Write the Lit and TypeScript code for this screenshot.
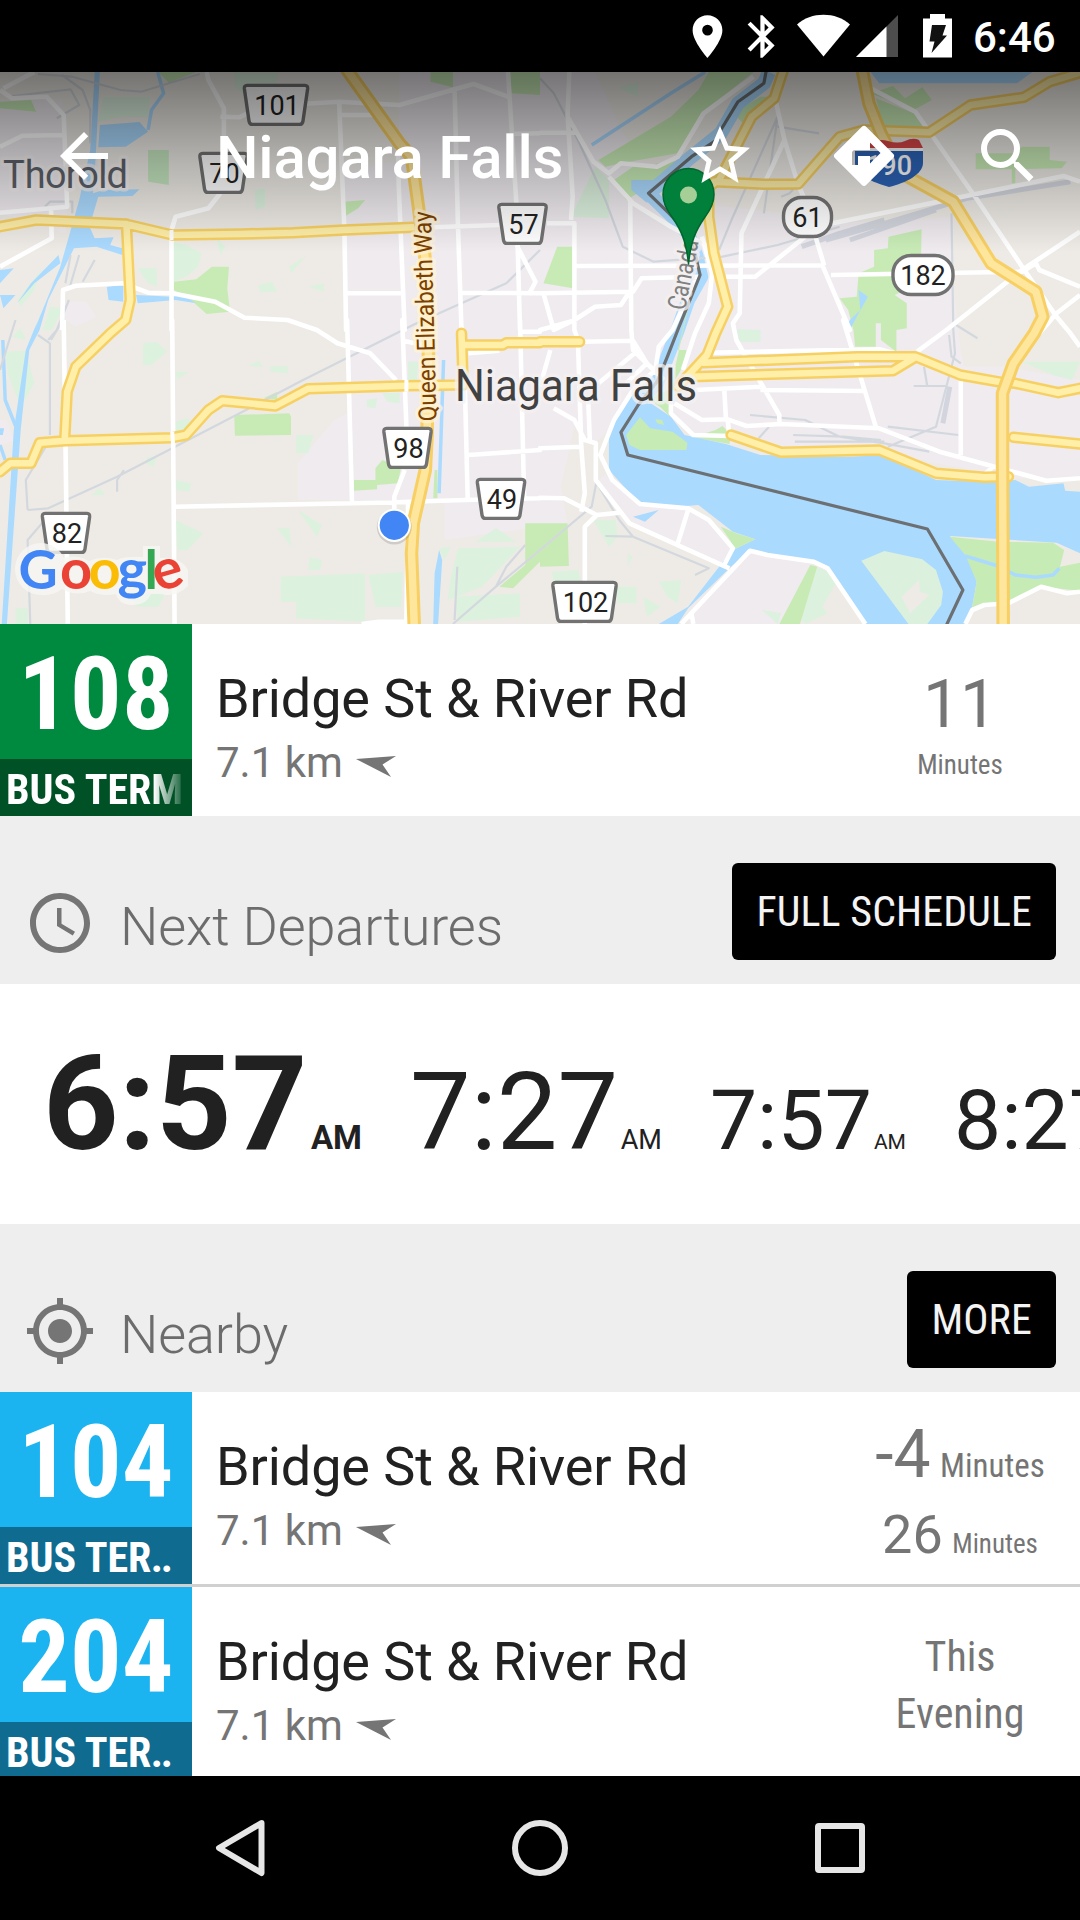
import { LitElement, html, svg, css, nothing, TemplateResult } from "lit";
import { customElement, property } from "lit/decorators.js";

/* Map geometry is kept per tile; a letter in a point list switches the tile. */
const TILES: Record<string, [number, number]> = { A: [0, 0], B: [540, 0], C: [0, 320], D: [540, 320] };
const SX = 540 / 1568;
const SY = 1 / 3;

function line(src: string, close = false): string {
  let [ox, oy] = TILES.A;
  const out: string[] = [];
  const t = src.trim().split(/\s+/);
  for (let i = 0; i < t.length; ) {
    if (TILES[t[i]]) {
      [ox, oy] = TILES[t[i]];
      i++;
      continue;
    }
    out.push(`${(ox + +t[i] * SX).toFixed(1)} ${(oy + +t[i + 1] * SY).toFixed(1)}`);
    i += 2;
  }
  return "M" + out.join("L") + (close ? "Z" : "");
}
const lines = (list: string[], close = false) => list.map((l) => line(l, close)).join("");

const URBAN = [
  "A 1000 520 1160 480 1160 216 1568 216 B 160 216 240 400 380 600 700 640 850 670 1200 650 1200 860 D 1220 80 1230 140 1350 140 1568 180 1568 480 1380 475 1000 400 500 370 380 300 200 330 160 370 100 320 60 500 80 610 0 620 C 1290 660 1290 540 865 540 865 430 970 300 1010 280",
  "A 0 300 180 300 195 620 190 700 0 640",
  "A 185 905 250 905 280 950 220 980 190 960",
  "D 430 870 610 690 790 725 780 740 700 912 430 912",
  "D 165 480 200 460 290 552 430 565 490 600 555 690 530 730 430 680 270 610",
  "C 0 380 40 360 20 300 0 300",
];
const GREEN = [
  "A 505 845 570 838 615 800 665 800 660 865 668 935 600 942 560 905 505 870",
  "A 1000 605 1060 600 1040 625 1000 650",
  "A 1480 216 1568 216 1568 285 1485 280",
  "A 1250 216 1315 216 1315 262 1250 245",
  "A 460 216 570 216 490 248",
  "A 0 305 90 300 105 335 0 325",
  "C 680 285 840 280 845 290 845 345 682 347",
  "C 1028 480 1090 480 1090 445 1110 420 1165 440 1155 490 1095 495 1095 508 1028 512",
  "C 765 235 805 215 805 240",
  "C 1525 610 1568 610 1568 725 1490 805 1450 800 1525 735",
  "C 1262 450 1270 450 1270 535 1258 535",
  "D 0 610 80 610 84 738 0 740",
  "D 785 735 805 740 755 912 695 912",
  "B 970 750 1010 745 1012 710 1108 688 1105 850 1030 885 1065 910 1065 990 D 1065 25 1035 30 1035 95 990 60 990 10 975 10 975 80 915 80 B 910 990 895 930 870 895 920 890 925 820 970 800",
  "B 490 216 620 216 470 340 400 460 235 490 190 500 170 480 380 350 460 270",
  "B 960 280 1025 258 1060 295 1110 262 1138 300 1085 330",
  "B 975 295 1085 340 1120 390 1000 390",
  "B 1265 460 1380 460 1400 440 1480 440 1480 480 1530 485 1515 505 1380 508 1380 550 1370 550 1370 508 1265 508",
  "B 560 340 640 290 660 290 620 350 600 380",
  "B 50 740 95 740 95 865 10 850",
  "B 215 540 270 500 420 480 350 540 250 600",
  "D 510 330 530 318 555 345 550 372 440 352",
];
const MINT = [
  "A 500 725 540 735 585 760 575 800 540 830 500 845",
  "A 400 805 455 805 455 860 430 850",
  "A 300 290 435 290 430 350 350 350 285 365",
  "A 740 570 770 565 770 620 742 630",
  "A 840 800 890 765 845 820",
  "A 750 855 790 845 805 875 755 875",
  "A 895 860 940 850 940 875",
  "A 630 715 655 740 640 765",
  "A 680 216 810 216 800 255 860 255 740 310 680 260",
  "A 50 900 120 810 100 870 60 920",
  "A 145 920 185 925 150 990 125 990",
  "B 160 500 200 540 200 655 90 650",
  "B 225 265 285 245 285 290",
  "C 415 70 455 65 485 95 440 135 415 135",
  "C 785 138 835 138 835 160 785 155",
  "C 720 138 750 122 765 140",
  "C 860 345 910 345 895 400 860 400",
  "C 510 600 590 640 545 690 515 690",
  "C 510 155 550 155 515 178",
  "C 510 305 545 295 560 320 510 345",
  "C 815 770 1060 760 1060 905 860 895 860 845 815 845",
  "C 1070 765 1170 755 1165 860 1090 860",
  "C 1275 685 1310 680 1290 720",
  "C 1330 685 1510 680 1400 800 1300 840 1310 770",
  "C 1320 830 1510 820 1510 890 1330 905",
  "C 1380 665 1440 625 1500 665",
  "C 510 480 555 490 550 515 512 510",
  "C 15 95 75 92 100 190 60 260 25 170",
  "C 370 820 480 820 460 860 400 860",
  "C 805 625 840 625 845 680",
  "C 865 570 935 615 920 650",
  "C 900 710 935 720 930 750 895 750",
  "C 430 410 455 410 445 440 420 430",
  "C 265 525 290 505 305 525",
  "C 45 865 80 865 80 912 45 912",
  "C 1065 240 1095 235 1090 265 1065 260",
  "C 1110 220 1160 218 1160 250 1125 245",
  "C 1185 125 1215 125 1210 180 1185 180",
  "C 35 50 60 25 75 60",
  "D 35 755 110 750 120 785 40 790",
  "D 155 600 220 600 225 650 200 680",
  "D 570 28 640 30 640 65 580 65",
  "D 220 800 280 800 280 850 225 850",
  "D 345 785 410 780 400 850 370 830",
  "D 300 830 350 860 310 890",
  "D 255 700 268 710 255 740",
  "D 790 735 870 770 820 860 835 880 770 912 760 900",
  "D 645 870 700 880 690 912",
  "D 1400 125 1568 125 1545 180 1490 165",
];
const WATER = [
  "A 275 216 290 216 278 470 270 580 300 570 405 568 385 588 285 590 260 680 275 715 330 712 320 735 355 745 355 765 280 740 215 745 140 900 115 990 C 85 90 60 330 20 912 5 912 40 330 75 90 110 0 A 100 990 175 800 230 600 262 450",
  "A 290 375 405 366 430 395 365 440 285 442",
  "A 310 860 358 855 358 905 315 900",
  "A 395 885 500 890 530 885 570 910 510 900 400 910",
  "A 0 810 40 805 0 850",
  "A 50 910 90 850 170 765 175 790 100 850",
  "A 0 885 45 885 10 925",
  "C 0 325 12 325 8 345 0 345",
  "C 1275 690 1284 720 1272 912 1258 912 1262 760",
  "B 265 540 330 540 360 570 310 608 265 570",
  "B 960 216 1430 216 1385 250 985 250",
  "B 925 870 952 890 920 950 900 990 D 905 25 895 10 B 900 960 930 930",
  "D 265 210 300 235 380 290 420 345 540 372 640 405 900 410 1000 405 1150 480 1300 485 1380 480 1420 500 1520 490 1525 512 1568 515 1568 700 1500 668 1190 648 1235 690 1268 785 1255 860 1235 912 945 912 835 745 790 725 610 690 550 745 430 865 400 912 345 912 430 860 520 740 560 690 625 658 560 635 460 555 400 560 290 552 200 450 200 330",
  "D 270 590 345 570 305 605",
];
const ISLE = [
  "D 250 345 290 292 320 325 385 335 428 368 425 390 290 390 260 375",
  "D 335 298 355 300 360 315 340 310",
  "D 310 235 375 210 378 290 350 262",
  "D 525 620 570 640 625 658 560 690 555 665",
  "D 1190 650 1330 665 1490 668 1522 690 1510 740 1568 728 1568 812 1455 800 1370 850 1255 862 1268 785 1235 705",
  "B 465 760 D 400 90 425 90 415 140 380 200",
];
const WHITE = [
  "A 600 216 605 240 650 325 650 470",
  "A 640 350 695 352 740 330",
  "A 640 580 605 625 510 650 498 690 498 990 C 500 0 507 912",
  "A 870 312 985 305 1160 315 1320 268 1375 252 1475 290",
  "A 985 345 1100 345",
  "A 1480 402 1568 400",
  "A 985 310 1000 690 1005 990 C 1008 0 1022 545",
  "A 1155 430 1158 560 1175 990 C 1168 0 1180 320",
  "A 1320 268 1330 680 1340 990 C 1350 200 1358 540",
  "A 1475 216 1500 620 1510 990 C 1510 0 1522 540",
  "A 1255 682 1450 675",
  "A 1000 880 1170 880",
  "A 1340 878 1568 880",
  "A 1500 735 1555 845 1535 885",
  "A 0 270 35 295 135 290 185 345 195 620 0 638",
  "A 0 440 65 407 185 405",
  "A 10 265 100 216",
  "A 148 625 150 715 0 800",
  "A 180 990 183 870 220 857 358 850 430 878 500 880 625 905 710 953 835 960 920 990 C 980 70 1075 100 1150 180",
  "C 185 0 190 350 197 912",
  "C 507 560 1100 548 1350 540 1568 535 D 0 533 70 535 165 585 230 578",
  "C 1175 450 1145 530 1145 580",
  "C 1185 545 1180 912",
  "C 1050 912 1100 905 1180 905",
  "C 1360 405 1568 390 D 0 385 120 380",
  "C 1360 100 1450 92",
  "C 1170 62 1230 75",
  "C 1510 35 1568 35 D 0 30 105 0",
  "B 85 216 80 345 95 590 90 660",
  "B 20 670 100 670 100 990 D 110 60 120 380 130 520 120 575",
  "B 80 350 155 485 200 520 235 490 340 500 400 470 475 340 620 230",
  "B 0 398 110 398",
  "B 200 530 270 610 380 680 490 740",
  "B 262 600 265 990 D 270 90 360 180",
  "B 100 798 820 796 900 990 D 880 0 975 320",
  "B 540 830 625 830 770 710",
  "B 800 710 825 796",
  "B 845 825 1400 815 1440 790 1450 810 1568 860",
  "B 960 265 1090 335 1270 600 1400 800 1500 950 1540 1000 D 1568 80",
  "B 1568 695 1400 810 1180 990 D 1095 95",
  "B 1568 885 1500 940 1450 1000",
  "B 850 670 1520 528 1568 545",
  "B 685 305 710 420 750 555 765 590",
  "B 710 420 585 700 580 940 560 970 D 570 60 695 285 695 305",
  "B 470 710 500 820 490 910 450 1000 D 415 150",
  "B 0 880 270 875 295 835 460 830",
  "B 10 880 40 990 100 960 160 920 235 915 260 875",
  "B 455 830 385 990 D 345 80 335 150 270 210 215 300 175 405 210 480 290 552 430 565 490 600 560 685 535 735",
  "D 490 98 985 88 1030 100",
  "D 30 90 0 200",
  "D 140 240 145 365",
  "D 125 65 270 62 310 130 250 190",
  "D 170 190 280 95",
  "D 40 265 100 300 130 360 162 370 162 480 260 610 550 745",
  "D 130 912 130 620 165 585",
  "D 430 570 400 670",
  "D 440 880 445 912",
  "D 410 912 610 692 660 705 795 725 835 745 945 912",
  "D 380 215 380 280 445 345 550 348 545 300",
  "D 390 250 470 300 545 298 600 318 700 312 985 325 1160 395 1320 440 1470 482 1568 475",
  "D 450 210 640 200",
  "D 640 210 940 213",
  "D 535 205 540 300",
  "D 1222 180 1222 405",
  "D 1235 912 1255 870 1290 855 1360 850 1455 800 1530 820 1568 815",
  "D 1290 465 1315 440",
];
const RAIL = [
  "A 110 222 210 230 350 270 410 275 490 250 580 222",
  "A 180 225 240 270 262 330 262 430",
  "A 35 288 205 268 230 315 165 355",
  "A 130 620 145 605 210 605 210 640",
  "A 205 765 190 850",
  "A 230 765 200 870",
  "A 275 780 240 845",
  "A 200 900 165 990 C 140 60",
  "C 80 570 140 565 340 470 640 310 880 180 1205 12 A 1470 850 1568 750",
  "C 110 45 145 70 145 345",
  "C 148 60 180 5",
  "C 45 0 0 150",
  "C 88 912 80 660 130 600",
  "C 80 570 75 480 145 360",
  "C 340 515 340 480 360 450",
  "C 1315 912 1440 800 1568 690 D 0 690 150 560 165 480",
  "C 1440 800 1470 740 1525 675",
  "C 1328 740 1320 900",
  "B 0 235 40 280 110 420 190 600 240 740 330 785 530 770 690 735 870 680",
  "B 520 750 560 650 690 350",
  "B 690 350 650 640",
  "B 690 380 810 400",
  "B 700 590 725 580 750 550",
  "B 1195 640 1200 990 D 1205 100 1150 320 1010 380",
  "D 1188 45 1195 110 1222 130",
  "D 1200 10 1270 55",
  "D 610 285 770 300 870 350 1000 370 1130 395",
  "D 665 320 635 355",
  "D 735 345 880 350 990 360",
  "D 740 365 1000 365",
  "D 1010 320 1215 345",
  "D 1085 198 1180 198",
  "D 1115 140 1125 200",
  "D 190 648 270 650 490 745 450 765",
  "D 165 490 230 600 270 650",
];
const YARD = ["B 830 720 1000 670 1240 595 1540 545", "B 760 740 870 700 1000 660", "B 900 720 1150 630", "D 1170 310 1190 200"];
const ROADS = [
  "A 0 680 105 660 365 672 500 705 700 702 850 698 1000 690 1200 682",
  "A 367 672 378 900 365 960 320 1000 C 220 140 195 215 188 360",
  "C 0 455 30 430 90 430 115 368 190 362 500 353 540 345 605 270 645 242 800 258 895 206 1180 197 1330 195",
  "C 1340 40 1345 195",
  "C 1350 75 1460 75 1470 68 1568 68 D 0 65 115 65",
  "B 705 216 680 295 615 350 520 540 490 560 490 650 505 760 545 920 510 1000 D 485 105 400 200",
  "B 505 545 650 553 750 552 870 410 940 390 1130 397 1250 315 1405 292 1480 245 1568 218",
  "D 475 128 920 110 1090 110 1220 165 1340 187 1380 190 1505 218 1568 205",
  "D 440 170 1025 152 1085 115",
  "D 555 345 700 397 985 390 1150 460 1290 472 1360 470",
  "D 1375 352 1568 372",
];
const HIGHWAYS = [
  "A 1005 206 1160 430 1195 470 1215 620 1235 780 1245 990 C 1240 350 1235 450 1200 610 1195 700 1203 920",
  "B 935 206 955 310 990 400 1050 520 1200 605 1310 790 1440 875 1460 950 1435 1000 D 1375 130 1343 220 1343 400 1345 920",
];
const RIVER = line("B 665 216 650 250 575 310 525 400 440 470 315 580 375 640 430 700 455 770 468 830 430 900 400 990 D 370 110 340 190 275 255");
const BORDER = line("B 658 206 650 250 575 305 525 390 520 415 440 470 315 580 375 640 430 700 450 760 465 825 400 990 D 370 110 340 185 285 255 235 337 255 405 1125 627 1228 810 1178 920");
const STREAMS = lines([
  "A 458 216 475 280 440 330 430 390",
  "C 8 60 15 240 50 330",
  "C 0 375 15 420",
  "C 1288 120 1275 520",
  "B 150 435 B 380 280 480 216",
  "D 1235 708 1330 738 1380 765 1440 772 1490 765 1508 745",
]);

interface Badge { text: string; x: number; y: number; w: number; oval?: boolean }
const BADGES: Badge[] = [
  { text: "101", x: 277, y: 104.9, w: 62 },
  { text: "70", x: 224.5, y: 172.9, w: 46 },
  { text: "57", x: 523.5, y: 223.9, w: 46 },
  { text: "98", x: 408.5, y: 447.9, w: 46 },
  { text: "49", x: 502, y: 498.9, w: 46 },
  { text: "82", x: 67, y: 532.9, w: 46 },
  { text: "102", x: 585.5, y: 601.9, w: 62 },
  { text: "61", x: 807.5, y: 217, w: 48, oval: true },
  { text: "182", x: 923, y: 275, w: 60, oval: true },
];

function badge(b: Badge) {
  const h = b.w / 2 - 1;
  const shape = b.oval
    ? svg`<rect class="plate" x=${b.x - b.w / 2} y=${b.y - 19.5} width=${b.w} height="39" rx="18"/>`
    : svg`<path class="plate" d=${`M${b.x - h + 2} ${b.y - 19.5}H${b.x + h - 2}q3 0 2.6 3.5l-4.6 32q-.5 3.5-3.5 3.5H${b.x - h + 5.5}q-3 0-3.5-3.5l-4.6-32q-.4-3.5 2.6-3.5Z`}/>`;
  return svg`${shape}<text class="num" x=${b.x} y=${b.y + 9.6}>${b.text}</text>`;
}

@customElement("transit-map")
class TransitMap extends LitElement {
  static styles = css`
    :host { display: block; height: 552px; }
    svg { display: block; width: 1080px; height: 552px; }
    text { font-family: Roboto, "Liberation Sans", sans-serif; }
    path { stroke-linejoin: round; }
    .line { fill: none; }
    .round { stroke-linecap: round; }
    .plate { fill: #fff; stroke: #727272; stroke-width: 3.4; }
    .num { font-size: 27px; fill: #222; text-anchor: middle; }
    .label { fill: #414141; stroke: #f5f1f1; stroke-opacity: .75; stroke-width: 7px; paint-order: stroke; stroke-linejoin: round; }
    .town { fill: #5c6068; }
    .qew { fill: #7b3f00; stroke: #fff3d6; }
    .canada { fill: #808080; }
    .logo { font-family: Lato, sans-serif; font-weight: 700; font-size: 54px; }
    .low { font-size: 56px; }
  `;
  render() {
    return html`<svg viewBox="0 72 1080 552">
      <defs>
        <linearGradient id="scrim" x1="0" y1="72" x2="0" y2="252" gradientUnits="userSpaceOnUse">
          <stop offset="0" stop-color="#000" stop-opacity=".51"/>
          <stop offset=".5" stop-color="#000" stop-opacity=".24"/>
          <stop offset="1" stop-color="#000" stop-opacity="0"/>
        </linearGradient>
      </defs>
      <rect x="0" y="72" width="1080" height="552" fill="#eeebe6"/>
      <path d=${lines(URBAN, true)} fill="#efebef"/>
      <path d=${lines(MINT, true)} fill="#dcf1de"/>
      <path d=${lines(GREEN, true)} fill="#c8ebb6"/>
      <path d=${line("A 430 450 490 450 490 555 430 545", true)} fill="#c5e6c0"/>
      <path d=${lines(WATER, true)} fill="#abdaff"/>
      <path class="line" d=${RIVER} stroke="#abdaff" stroke-width="14"/>
      <path d=${lines(ISLE, true)} fill="#c6ebb5"/>
      <path d=${line("D 933 722 1000 693 1110 718 1150 750 1170 815 1165 855 1125 912 1070 912", true)} fill="#dbf1de"/>
      <path d=${line("D 1050 830 1100 780 1103 815 1130 825 1075 880", true)} fill="#eeebe6"/>
      <path class="line" d=${STREAMS} stroke="#abdaff" stroke-width="3.5"/>
      <path class="line" d=${lines(RAIL)} stroke="#d3d8de" stroke-width="2.2"/>
      <path class="line" d=${lines(YARD)} stroke="#d3d5de" stroke-width="5"/>
      <path class="line" d=${lines(WHITE)} stroke="#fff" stroke-width="4.6"/>
      <path class="line" d=${BORDER} stroke="#6c7072" stroke-width="3.2"/>
      <path class="line round" d=${lines(ROADS)} stroke="#f7d064" stroke-width="11.5"/>
      <path class="line round" d=${lines(ROADS)} stroke="#ffefa9" stroke-width="6.5"/>
      <path class="line" d=${lines(HIGHWAYS)} stroke="#f7cf63" stroke-width="13.5"/>
      <path class="line" d=${lines(HIGHWAYS)} stroke="#ffe69d" stroke-width="7.5"/>
      <path class="line" d=${line("C 1180 180 1180 215")} stroke="#fff" stroke-width="4"/>
      <path class="line" d=${line("C 500 335 503 380")} stroke="#fff" stroke-width="4"/>
      <path class="line" d=${line("A 498 690 498 720")} stroke="#fff" stroke-width="4"/>
      <text class="label town" x="3" y="188" font-size="38" textLength="125">Thorold</text>
      <text class="label" x="455" y="401" font-size="44" textLength="242" lengthAdjust="spacingAndGlyphs">Niagara Falls</text>
      <text class="label qew" transform="translate(436.500 421) rotate(-91.500)" font-size="25" textLength="210" lengthAdjust="spacingAndGlyphs">Queen Elizabeth Way</text>
      <text class="label canada" transform="translate(685 311) rotate(-79)" font-size="26" textLength="71" lengthAdjust="spacingAndGlyphs">Canada</text>
      ${BADGES.map(badge)}
      <path d="M855 151H923V163C923 174 906 183 889 187C872 182 855 175 855 163Z" fill="#2b62b5"/>
      <path d="M859 142q6 3 12 1q8-5 17-2q10 3 17 0q8-4 14-1q2 4 4 8H856Z" fill="#d64545"/>
      <path d="M854 149.500H923" stroke="#fff" stroke-width="3"/>
      <text x="889" y="175" font-size="27" font-weight="500" fill="#fff" text-anchor="middle">190</text>
      <path d="M41 543a26 26 0 0 1 23 15q11-4 25 3q14-6 28-1q8-4 26-3V546H160V558Q180 556 188 570V586Q176 598 160 594H151Q146 606 131 605Q118 604 116 594Q102 597 90 591Q76 597 62 589Q53 596 41 595A26 26 0 0 1 41 543Z" fill="#f6f6f3" opacity=".8"/>
      <text class="logo" y="588.500"><tspan x="18.500" fill="#4285f4">G</tspan><tspan class="low" x="60" fill="#ea4335">o</tspan><tspan class="low" x="88.500" fill="#fbbc05">o</tspan><tspan class="low" x="117.500" fill="#4285f4">g</tspan><tspan x="144.500" fill="#34a853">l</tspan><tspan class="low" x="157.500" y="592" rotate="-16" fill="#ea4335">e</tspan></text>
      <circle cx="394.300" cy="527" r="17.500" fill="#000" opacity=".13"/>
      <circle cx="394.300" cy="525.300" r="16.600" fill="#fff"/>
      <circle cx="394.300" cy="525.300" r="14.600" fill="#4285f4"/>
      <rect x="0" y="72" width="1080" height="180" fill="url(#scrim)"/>
      <path d="M688.500 264C686 240 681 230 672 217C666 209 663 203 663 194.500A25.500 26 0 0 1 714 194.500C714 203 711 209 705 217C696 230 691 240 688.500 264Z" fill="#00803a" stroke="#00672d" stroke-width="1.500"/>
      <circle cx="688.500" cy="195" r="8.500" fill="#a6cf98"/>
    </svg>`;
  }
}

const glyph = (d: string) => html`<svg viewBox="0 0 24 24"><path d=${d} fill="currentColor"/></svg>`;
const ICON = {
  back: "M20 11H7.830l5.590-5.590L12 4l-8 8 8 8 1.410-1.410L7.830 13H20v-2z",
  star: "M22 9.240l-7.190-.62L12 2 9.190 8.630 2 9.240l5.460 4.730L5.820 21 12 17.270 18.180 21l-1.630-7.030L22 9.240zM12 15.400l-3.760 2.270 1-4.280-3.320-2.880 4.380-.38L12 6.100l1.710 4.040 4.380.38-3.320 2.880 1 4.280L12 15.400z",
  directions: "M21.710 11.290l-9-9a.996.996 0 0 0-1.410 0l-9 9a.996.996 0 0 0 0 1.410l9 9c.39.39 1.020.39 1.410 0l9-9a.996.996 0 0 0 0-1.410zM14 14.500V12h-4v3H8v-4c0-.55.45-1 1-1h5V7.500l3.500 3.500-3.500 3.500z",
  search: "M15.500 14h-.79l-.28-.27A6.471 6.471 0 0 0 16 9.500 6.500 6.500 0 1 0 9.500 16c1.610 0 3.090-.59 4.230-1.570l.27.28v.79l5 4.990L20.490 19l-4.990-5zm-6 0C7.010 14 5 11.990 5 9.500S7.010 5 9.500 5 14 7.010 14 9.500 11.990 14 9.500 14z",
  place: "M12 2C8.130 2 5 5.130 5 9c0 5.250 7 13 7 13s7-7.750 7-13c0-3.870-3.130-7-7-7zm0 9.500a2.500 2.500 0 0 1 0-5 2.500 2.500 0 0 1 0 5z",
  bluetooth: "M17.710 7.710L12 2h-1v7.590L6.410 5 5 6.410 10.590 12 5 17.590 6.410 19 11 14.410V22h1l5.710-5.710-4.300-4.290 4.300-4.290zM13 5.830l1.880 1.880L13 9.590V5.830zm1.880 10.460L13 18.170v-3.760l1.880 1.880z",
  clock: "M11.990 2C6.470 2 2 6.480 2 12s4.470 10 9.990 10C17.520 22 22 17.520 22 12S17.520 2 11.990 2zM12 20c-4.420 0-8-3.580-8-8s3.580-8 8-8 8 3.580 8 8-3.580 8-8 8zM12.500 7H11v6l5.250 3.150.75-1.230-4.500-2.670z",
  target: "M12 8c-2.210 0-4 1.790-4 4s1.790 4 4 4 4-1.790 4-4-1.790-4-4-4zm8.940 3A8.994 8.994 0 0 0 13 3.060V1h-2v2.060A8.994 8.994 0 0 0 3.060 11H1v2h2.060A8.994 8.994 0 0 0 11 20.940V23h2v-2.060A8.994 8.994 0 0 0 20.940 13H23v-2h-2.060zM12 19c-3.870 0-7-3.130-7-7s3.130-7 7-7 7 3.130 7 7-3.130 7-7 7z",
};

@customElement("status-bar")
class StatusBar extends LitElement {
  static styles = css`
    :host { display: flex; height: 72px; background: #000; color: #fff; box-sizing: border-box; padding: 11px 22px 0 0; justify-content: flex-end; align-items: flex-start; }
    svg { display: block; width: 51px; height: 51px; }
    .bt { margin-left: 4px; }
    .rest { width: 160px; height: 50px; margin-left: 7px; }
    .time { font: 500 42px/50px Roboto, sans-serif; margin-left: 18px; padding-top: 1.5px; width: 85px; white-space: nowrap; }
  `;
  render() {
    return html`${glyph(ICON.place)}
      <div class="bt">${glyph(ICON.bluetooth)}</div>
      <svg class="rest" viewBox="795 11 160 50" fill="#fff">
        <path d="M797 24.500C811 11.500 836 11.500 850 24.500L823.500 56.500Z"/>
        <path d="M898 15V57H856Z" fill="#4d4d4d"/>
        <path d="M886.500 26.500V57H856Z"/>
        <path d="M930 14h15v4.500h7V57.500H923V18.500h7Z"/>
        <path d="M932 25H946L942.500 35.500H947L931.500 53L934.500 41.500H929.500Z" fill="#111"/>
      </svg>
      <div class="time">6:46</div>`;
  }
}

@customElement("route-badge")
class RouteBadge extends LitElement {
  @property() number = "";
  @property() label = "";
  @property({ type: Boolean }) cut = false;
  @property({ reflect: true }) tone = "blue";
  static styles = css`
    :host { display: flex; flex-direction: column; width: 192px; height: 192px; flex: none; overflow: hidden; color: #fff; background: #1bb4f1; font-family: "Roboto Condensed", Roboto, sans-serif; font-stretch: 75%; font-weight: 700; }
    :host([tone="green"]) { background: #008a40; }
    .number { height: 135px; font-size: 102px; line-height: 140px; text-align: center; letter-spacing: .3px; flex: none; }
    .strip { height: 57px; background: #0f6b90; font-size: 42px; line-height: 61px; padding-left: 6px; white-space: nowrap; overflow: hidden; }
    .dots { letter-spacing: -2.2px; margin-left: -.5px; }
    :host([tone="green"]) .strip { background: #005226; }
    :host([tone="green"]) .text { -webkit-mask-image: linear-gradient(90deg, #000 148px, transparent 180px); mask-image: linear-gradient(90deg, #000 148px, transparent 180px); }
  `;
  render() {
    return html`<div class="number">${this.number}</div><div class="strip"><div class="text">${this.label}${this.cut ? html`<span class="dots">..</span>` : nothing}</div></div>`;
  }
}

@customElement("stop-row")
class StopRow extends LitElement {
  @property() number = "";
  @property() label = "";
  @property() tone = "blue";
  @property({ type: Boolean }) cut = false;
  static styles = css`
    :host { display: flex; height: 192px; background: #fff; }
    .info { flex: 1; padding: 43px 0 0 24px; display: flex; flex-direction: column; gap: 8px; font-family: Roboto, sans-serif; }
    .name { font-size: 54px; line-height: 63px; color: #212121; letter-spacing: -.1px; white-space: nowrap; }
    .far { display: flex; font-size: 42px; line-height: 49px; color: #757575; }
    .far svg { width: 40px; height: 22px; margin: 18px 0 0 13px; }
    .eta { width: 240px; flex: none; color: #757575; text-align: center; display: flex; flex-direction: column; align-items: center; }
  `;
  render() {
    return html`<route-badge number=${this.number} label=${this.label} tone=${this.tone} ?cut=${this.cut}></route-badge>
      <div class="info">
        <div class="name">Bridge St &amp; River Rd</div>
        <div class="far">7.1 km<svg viewBox="0 0 40 22"><path d="M0 3L40 0L26.500 8.500L35 21Z" fill="#757575"/></svg></div>
      </div>
      <div class="eta"><slot></slot></div>`;
  }
}

@customElement("section-head")
class SectionHead extends LitElement {
  @property() icon: keyof typeof ICON = "clock";
  @property() heading = "";
  @property() action = "";
  static styles = css`
    :host { display: flex; height: 168px; background: #eee; box-sizing: border-box; padding: 47px 24px 0; align-items: flex-start; color: #757575; }
    svg { width: 72px; height: 72px; display: block; margin-top: 24px; }
    .heading { font: 300 54px/63px Roboto, sans-serif; letter-spacing: -.13px; color: #6c6c6c; margin: 32px 0 0 24px; flex: 1; }
    .action { background: #000; color: #f4f4f4; border-radius: 6px; height: 97px; font: 400 42px/98px "Roboto Condensed", Roboto, sans-serif; font-stretch: 75%; letter-spacing: .1px; padding: 0 24px; border: 0; white-space: nowrap; }
  `;
  render() {
    return html`${glyph(ICON[this.icon])}<div class="heading">${this.heading}</div><button class="action">${this.action}</button>`;
  }
}

const TIMES = [
  { time: "6:57", size: "xl" },
  { time: "7:27", size: "lg" },
  { time: "7:57", size: "md" },
  { time: "8:27", size: "md" },
];

@customElement("app-root")
class AppRoot extends LitElement {
  static styles = css`
    :host { display: flex; flex-direction: column; width: 1080px; height: 1920px; overflow: hidden; background: #fff; font-family: Roboto, "Liberation Sans", sans-serif; }
    .hero { position: relative; height: 552px; flex: none; }
    .toolbar { position: absolute; inset: 0 0 auto 0; height: 168px; display: flex; align-items: center; padding: 0 36px 0 48px; box-sizing: border-box; color: #fff; }
    .toolbar svg { width: 72px; height: 72px; display: block; }
    .title { font-size: 60px; line-height: 70px; font-weight: 500; letter-spacing: -.2px; margin: 4px 0 0 96px; flex: 1; white-space: nowrap; }
    .actions { display: flex; gap: 72px; }
    .times { height: 240px; flex: none; display: flex; align-items: baseline; gap: 48px; padding: 43px 0 0 43px; box-sizing: border-box; color: #212121; overflow: hidden; }
    .slot { display: flex; align-items: baseline; gap: 3px; white-space: nowrap; }
    .xl { font-size: 132px; line-height: 155px; font-weight: 700; gap: 3.5px; }
    .lg { font-size: 108px; gap: 2.5px; }
    .md { font-size: 84px; gap: 2px; }
    .ampm { font-size: .25em; }
    .list { height: 384px; flex: none; overflow: hidden; }
    .rule { height: 3px; background: #d0d0d0; }
    .big { font-size: 66px; line-height: 77px; }
    .solo { margin-top: 42px; }
    .cond { font-family: "Roboto Condensed", Roboto, sans-serif; font-stretch: 75%; }
    .small { font-size: 27px; line-height: 32px; }
    .unit { margin-top: 6px; }
    .pair { display: flex; align-items: baseline; gap: 9.5px; }
    .first { margin-top: 24px; }
    .second { margin-top: 10px; }
    .mid { font-size: 54px; line-height: 63px; }
    .u33 { font-size: 33px; }
    .later { font-size: 42px; line-height: 57px; margin-top: 41px; }
    .nav { height: 144px; flex: none; background: #000; display: flex; justify-content: center; gap: 228px; align-items: center; }
    .nav svg { width: 72px; height: 72px; display: block; fill: none; stroke: #e6e6e6; stroke-width: 6; stroke-linejoin: round; }
  `;
  render(): TemplateResult {
    return html`<status-bar></status-bar>
      <div class="hero">
        <transit-map></transit-map>
        <div class="toolbar">
          ${glyph(ICON.back)}
          <div class="title">Niagara Falls</div>
          <div class="actions">${glyph(ICON.star)}${glyph(ICON.directions)}${glyph(ICON.search)}</div>
        </div>
      </div>
      <stop-row number="108" label="BUS TERM" tone="green">
        <div class="big solo">11</div>
        <div class="small unit cond">Minutes</div>
      </stop-row>
      <section-head icon="clock" heading="Next Departures" action="FULL SCHEDULE"></section-head>
      <div class="times">
        ${TIMES.map((t) => html`<div class="slot ${t.size}"><span>${t.time}</span><span class="ampm">AM</span></div>`)}
      </div>
      <section-head icon="target" heading="Nearby" action="MORE"></section-head>
      <div class="list">
        <stop-row number="104" label="BUS TER" cut>
          <div class="pair first"><span class="big">-4</span><span class="u33 cond">Minutes</span></div>
          <div class="pair second"><span class="mid">26</span><span class="small cond">Minutes</span></div>
        </stop-row>
        <div class="rule"></div>
        <stop-row number="204" label="BUS TER" cut>
          <div class="later cond">This<br>Evening</div>
        </stop-row>
      </div>
      <div class="nav">
        <svg viewBox="0 0 72 72"><path d="M57.500 11L15 36L57.500 61Z"/></svg>
        <svg viewBox="0 0 72 72"><circle cx="36" cy="36" r="25"/></svg>
        <svg viewBox="0 0 72 72"><rect x="14" y="14" width="44" height="44" rx="1"/></svg>
      </div>`;
  }
}
